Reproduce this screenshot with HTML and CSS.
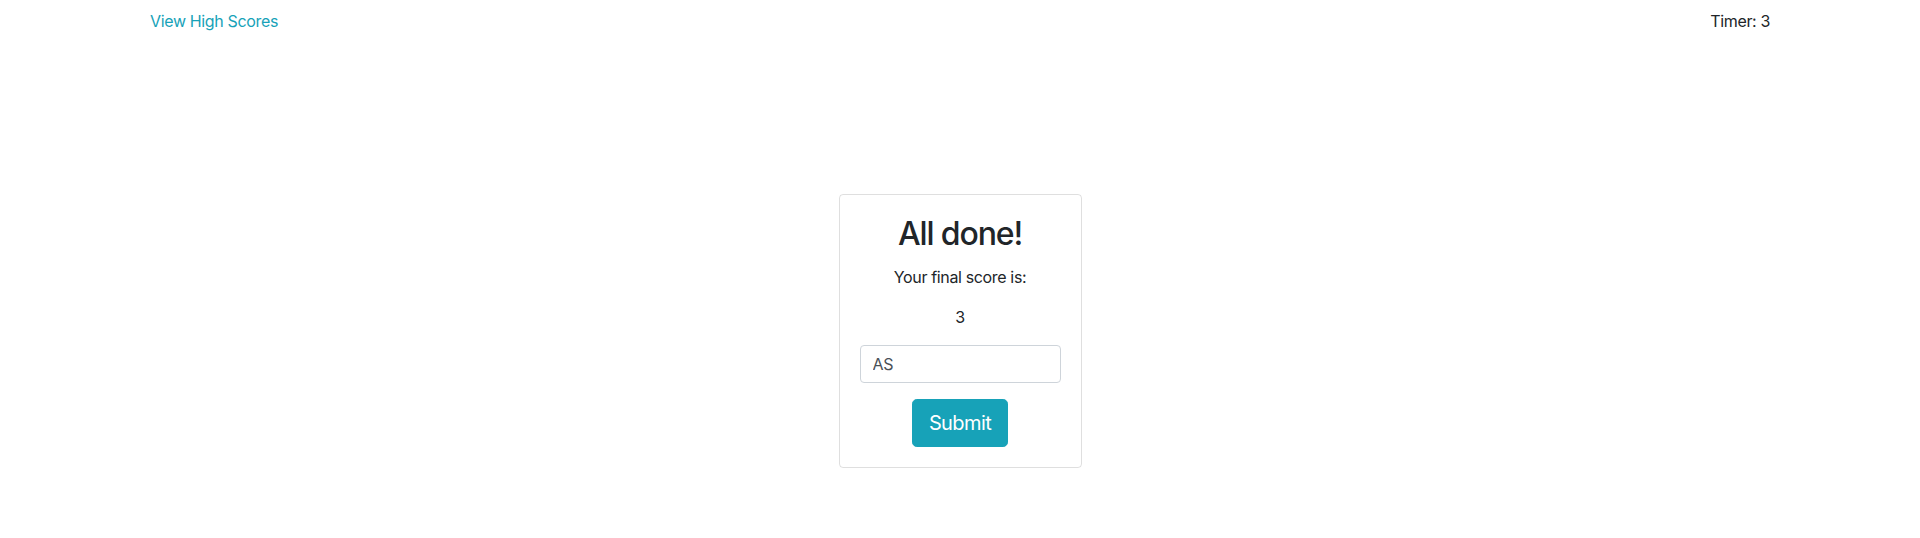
FILE: index.html
```html
<!DOCTYPE html>
<html lang="en">
<head>
<meta charset="utf-8">
<title>Quiz</title>
<link rel="stylesheet" href="styles.css">
</head>
<body>
<header class="topbar">
  <a class="scores-link" href="#">View High Scores</a>
  <span class="timer">Timer: 3</span>
</header>
<main class="stage">
  <section class="card">
    <h2 class="card-title">All done!</h2>
    <p class="card-text">Your final score is:</p>
    <p class="card-text score">3</p>
    <form class="score-form">
      <input class="form-control" type="text" value="AS">
      <button class="btn-submit" type="button">Submit</button>
    </form>
  </section>
</main>
</body>
</html>
```

FILE: styles.css
```css
* { box-sizing: border-box; }
html, body { margin: 0; padding: 0; }
body {
  font-family: Inter, "Noto Sans", "Liberation Sans", sans-serif;
  font-size: 16px;
  line-height: 24px;
  letter-spacing: -0.022em;
  color: #212529;
  background: #fff;
}
.topbar {
  display: flex;
  justify-content: space-between;
  padding: 9px 150px 0 150px;
}
.scores-link {
  color: #17a2b8;
  text-decoration: none;
}
.timer { color: #212529; }
.stage {
  display: flex;
  justify-content: center;
  padding-top: 161px;
}
.card {
  width: 243px;
  border: 1px solid rgba(0,0,0,.125);
  border-radius: 4px;
  padding: 20px;
  text-align: center;
}
.card-title {
  margin: 0 0 12px 0;
  font-size: 32px;
  font-weight: 500;
  line-height: 1.2;
  letter-spacing: -0.035em;
}
.card-text {
  margin: 0 0 16px 0;
}
.score { margin-bottom: 16px; }
.score-form {
  display: flex;
  flex-direction: column;
  align-items: center;
  gap: 16px;
}
.form-control {
  display: block;
  width: 100%;
  height: 38px;
  padding: 6px 12px;
  font-family: inherit;
  font-size: 16px;
  line-height: 24px;
  letter-spacing: -0.02em;
  color: #495057;
  background: #fff;
  border: 1px solid #ced4da;
  border-radius: 4px;
}
.btn-submit {
  font-family: inherit;
  font-size: 20px;
  line-height: 30px;
  letter-spacing: -0.03em;
  padding: 8px 16px;
  color: #fff;
  background: #17a2b8;
  border: 1px solid #17a2b8;
  border-radius: 4.8px;
}
```
